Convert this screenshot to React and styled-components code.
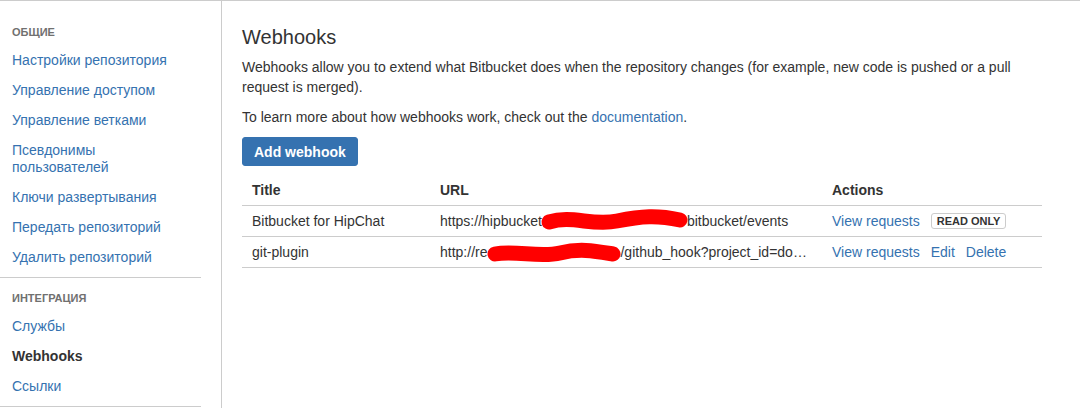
import React from 'react';
import styled, { createGlobalStyle } from 'styled-components';

/* ─── Data ──────────────────────────────────────────────────────────── */

const NAV = [
  {
    heading: 'Общие',
    items: [
      { label: 'Настройки репозитория' },
      { label: 'Управление доступом' },
      { label: 'Управление ветками' },
      { label: 'Псевдонимы пользователей' },
      { label: 'Ключи развертывания' },
      { label: 'Передать репозиторий' },
      { label: 'Удалить репозиторий' },
    ],
  },
  {
    heading: 'Интеграция',
    items: [
      { label: 'Службы' },
      { label: 'Webhooks', active: true },
      { label: 'Ссылки' },
    ],
  },
];

const HOOKS = [
  {
    title: 'Bitbucket for HipChat',
    before: 'https://hipbucket',
    after: 'bitbucket/events',
    scribble: { width: 145, d: 'M7 11 C 30 4, 50 15, 75 10 S 115 4, 138 9' },
    readOnly: true,
  },
  {
    title: 'git-plugin',
    before: 'http://re',
    after: '/github_hook?project_id=documentation-service',
    scribble: { width: 125, lead: 8, d: 'M0 12 C 20 8, 45 16, 65 11 S 100 9, 118 12' },
    readOnly: false,
  },
];

/* ─── Styled components ──────────────────────────────────────────────── */

const GlobalStyle = createGlobalStyle`
  html, body { margin: 0; padding: 0; background: #fff; }
  body {
    font-family: Arial, "Liberation Sans", sans-serif;
    font-size: 14px;
    line-height: 20px;
    color: #333;
  }
`;

const Page = styled.div`
  display: flex;
  height: 408px;
  border-top: 1px solid #ccc;
  box-sizing: border-box;
  overflow: hidden;
`;

const Sidebar = styled.nav`
  width: 201px;
  flex-shrink: 0;
  border-right: 1px solid #ccc;
  padding: 21px 20px 0 0;
`;

const NavGroup = styled.div`
  border-bottom: 1px solid #ccc;
  padding-bottom: 3px;
  margin-bottom: 10px;
`;

const NavHeading = styled.h5`
  margin: 0 0 5px;
  padding-left: 12px;
  font-size: 11px;
  line-height: 20px;
  font-weight: bold;
  text-transform: uppercase;
  color: #707070;
`;

const NavLink = styled.a`
  display: block;
  padding: 5px 12px;
  color: ${p => (p.$active ? '#333' : '#3572b0')};
  font-weight: ${p => (p.$active ? 'bold' : 'normal')};
  text-decoration: none;
  line-height: 17px;
  margin-bottom: 3px;
  cursor: pointer;
`;

const Main = styled.main`
  flex: 1;
  padding: 22px 20px 0 20px;
`;

const Title = styled.h2`
  margin: 0 0 6px;
  font-size: 20px;
  line-height: 28px;
  font-weight: normal;
  color: #333;
`;

const Para = styled.p`
  margin: 0 0 10px;
  width: 800px;
`;

const Link = styled.a`
  color: #3572b0;
  text-decoration: none;
  cursor: pointer;
`;

const Button = styled.button`
  display: block;
  margin-top: 10px;
  height: 29px;
  padding: 0 11px;
  background: #3572b0;
  border: 1px solid #3572b0;
  border-radius: 3px;
  color: #fff;
  font-family: inherit;
  font-size: 14px;
  font-weight: bold;
  cursor: pointer;
`;

const Table = styled.table`
  margin-top: 9px;
  width: 800px;
  border-collapse: collapse;
  table-layout: fixed;
`;

const Th = styled.th`
  text-align: left;
  font-weight: bold;
  padding: 5px 10px;
  height: 20px;
  border-bottom: 1px solid #ccc;
`;

const Td = styled.td`
  padding: 5px 10px;
  height: 20px;
  line-height: 20px;
  border-bottom: 1px solid #ccc;
  white-space: nowrap;
  overflow: hidden;
  text-overflow: ellipsis;
`;

const Actions = styled.div`
  display: flex;
  align-items: center;
  height: 20px;
  gap: 11px;
`;

const Lozenge = styled.span`
  display: inline-block;
  border: 1px solid #ccc;
  border-radius: 3px;
  padding: 0 5px;
  font-size: 11px;
  line-height: 14px;
  font-weight: bold;
  text-transform: uppercase;
  color: #333;
`;

const Scribble = styled.svg`
  display: inline-block;
  vertical-align: top;
  overflow: visible;
  margin-left: ${p => p.$lead || 0}px;
`;

/* ─── Component ─────────────────────────────────────────────────────── */

const Redaction = ({ width, d, lead }) => (
  <Scribble width={width} height={20} viewBox={`0 0 ${width} 20`} $lead={lead}>
    <path d={d} fill="none" stroke="#f00" strokeWidth="15" strokeLinecap="round" />
  </Scribble>
);

export default function App() {
  return (
    <>
      <GlobalStyle />
      <Page>
        <Sidebar>
          {NAV.map(group => (
            <NavGroup key={group.heading}>
              <NavHeading>{group.heading}</NavHeading>
              {group.items.map(item => (
                <NavLink key={item.label} $active={item.active}>
                  {item.label}
                </NavLink>
              ))}
            </NavGroup>
          ))}
        </Sidebar>

        <Main>
          <Title>Webhooks</Title>
          <Para>
            Webhooks allow you to extend what Bitbucket does when the repository changes (for
            example, new code is pushed or a pull request is merged).
          </Para>
          <Para>
            To learn more about how webhooks work, check out the <Link>documentation</Link>.
          </Para>
          <Button>Add webhook</Button>

          <Table>
            <colgroup>
              <col style={{ width: 188 }} />
              <col style={{ width: 392 }} />
              <col style={{ width: 220 }} />
            </colgroup>
            <thead>
              <tr>
                <Th>Title</Th>
                <Th>URL</Th>
                <Th>Actions</Th>
              </tr>
            </thead>
            <tbody>
              {HOOKS.map(h => (
                <tr key={h.title}>
                  <Td>{h.title}</Td>
                  <Td>
                    {h.before}
                    <Redaction {...h.scribble} />
                    {h.after}
                  </Td>
                  <Td>
                    <Actions>
                      <Link>View requests</Link>
                      {h.readOnly ? (
                        <Lozenge>Read only</Lozenge>
                      ) : (
                        <>
                          <Link>Edit</Link>
                          <Link>Delete</Link>
                        </>
                      )}
                    </Actions>
                  </Td>
                </tr>
              ))}
            </tbody>
          </Table>
        </Main>
      </Page>
    </>
  );
}
